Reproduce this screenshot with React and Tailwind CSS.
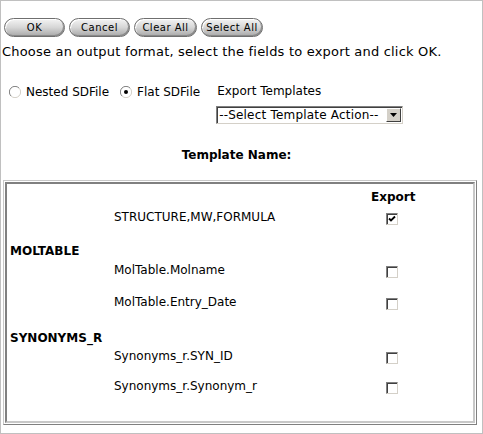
import { useState } from 'react';

const font = { fontFamily: '"DejaVu Sans", Verdana, sans-serif' };

const PillButton = ({ label, width }) => (
  <button
    className={`h-[19px] rounded-full border border-[#6f6f6f] bg-gradient-to-b from-[#f4f4f4] via-[#d6d6d6] to-[#a9a9a9] text-[10px] leading-none text-black shadow-[inset_-1px_-1px_0_#8a8a8a,inset_1px_1px_0_#ffffff] tracking-[0.5px] ${width}`}
  >
    {label}
  </button>
);

const Radio = ({ checked, onClick }) => (
  <svg width="12" height="12" viewBox="0 0 12 12" onClick={onClick} className="shrink-0 cursor-pointer">
    <circle cx="6" cy="6" r="5.5" fill="#ffffff" />
    <path d="M10 2 A5.5 5.5 0 0 0 2 10" fill="none" stroke="#808080" strokeWidth="1" />
    <path d="M2 10 A5.5 5.5 0 0 0 10 2" fill="none" stroke="#d4d0c8" strokeWidth="1" />
    {checked && <circle cx="6" cy="6" r="2" fill="#000000" />}
  </svg>
);

const Checkbox = ({ checked, onClick }) => (
  <span
    onClick={onClick}
    className="flex h-[12px] w-[12px] cursor-pointer items-center justify-center border border-t-[#808080] border-l-[#808080] border-b-[#d4d0c8] border-r-[#d4d0c8] bg-white shadow-[inset_1px_1px_0_#404040]"
  >
    {checked && (
      <svg width="8" height="8" viewBox="0 0 8 8">
        <path d="M1 3.5 L3 5.5 L7 1.5" fill="none" stroke="#000" strokeWidth="1.8" />
      </svg>
    )}
  </span>
);

const Item = ({ label, checked, onToggle, h }) => (
  <div className={`flex items-center ${h}`}>
    <span className="ml-[107px] w-[272px]">{label}</span>
    <span className="mt-[3px]">
      <Checkbox checked={checked} onClick={onToggle} />
    </span>
  </div>
);

export default function App() {
  const [format, setFormat] = useState('flat');
  const [fields, setFields] = useState({
    structure: true,
    molname: false,
    entry: false,
    synid: false,
    synonym: false,
  });
  const toggle = (k) => setFields({ ...fields, [k]: !fields[k] });

  return (
    <div style={font} className="h-[434px] w-[483px] border border-[#c0c0c0] bg-white text-[12px] text-black">
      {/* buttons */}
      <div className="ml-[3px] mt-[17px] flex gap-[4px]">
        <PillButton label="OK" width="w-[61px]" />
        <PillButton label="Cancel" width="w-[61px]" />
        <PillButton label="Clear All" width="w-[63px]" />
        <PillButton label="Select All" width="w-[62px]" />
      </div>
      <div className="ml-[1px] mt-[6px] text-[13px] leading-[17px] tracking-[0.2px]">
        Choose an output format, select the fields to export and click OK.
      </div>

      {/* format + templates */}
      <div className="mt-[23px] flex">
        <div className="ml-[8px] flex h-[17px] items-center">
          <Radio checked={format === 'nested'} onClick={() => setFormat('nested')} />
          <span className="ml-[5px]">Nested SDFile</span>
          <span className="ml-[11px]">
            <Radio checked={format === 'flat'} onClick={() => setFormat('flat')} />
          </span>
          <span className="ml-[5px]">Flat SDFile</span>
        </div>
        <div className="ml-[16px] flex flex-col">
          <span className="ml-[1px] leading-[17px]">Export Templates</span>
          <div className="mt-[6px] flex h-[18px] w-[187px] items-center border border-t-[#808080] border-l-[#808080] border-b-[#d4d0c8] border-r-[#d4d0c8] bg-white shadow-[inset_1px_1px_0_#404040]">
            <span className="ml-[2px] flex-1 whitespace-nowrap text-[12px] leading-[14px] tracking-[0.2px]">--Select Template Action--</span>
            <span className="mr-[1px] flex h-[14px] w-[15px] shrink-0 items-center justify-center border border-t-white border-l-white border-b-[#404040] border-r-[#404040] bg-[#d4d0c8]">
              <svg width="7" height="4" viewBox="0 0 7 4">
                <path d="M0 0 H7 L3.5 4 Z" fill="#000" />
              </svg>
            </span>
          </div>
        </div>
      </div>

      <div className="mt-[23px] pr-[10px] text-center font-bold leading-[16px]">Template Name:</div>

      {/* fields table */}
      <div className="ml-[2px] mt-[17px] w-[474px] border border-t-[#c8c8c8] border-l-[#c8c8c8] border-b-[#808080] border-r-[#808080] p-[1px]">
        <div className="h-[241px] border-2 border-t-[#808080] border-l-[#808080] border-b-[#c8c8c8] border-r-[#c8c8c8] pt-[4px]">
          <div className="flex h-[18px] items-center">
            <span className="ml-[364px] font-bold">Export</span>
          </div>
          <Item label="STRUCTURE,MW,FORMULA" checked={fields.structure} onToggle={() => toggle('structure')} h="h-[22px]" />
          <div className="mt-[14px] flex h-[18px] items-center font-bold">
            <span className="ml-[3px]">MOLTABLE</span>
          </div>
          <Item label="MolTable.Molname" checked={fields.molname} onToggle={() => toggle('molname')} h="h-[20px]" />
          <div className="mt-[12px]">
            <Item label="MolTable.Entry_Date" checked={fields.entry} onToggle={() => toggle('entry')} h="h-[20px]" />
          </div>
          <div className="mt-[17px] flex h-[18px] items-center font-bold">
            <span className="ml-[3px]">SYNONYMS_R</span>
          </div>
          <Item label="Synonyms_r.SYN_ID" checked={fields.synid} onToggle={() => toggle('synid')} h="h-[18px]" />
          <div className="mt-[12px]">
            <Item label="Synonyms_r.Synonym_r" checked={fields.synonym} onToggle={() => toggle('synonym')} h="h-[18px]" />
          </div>
        </div>
      </div>
    </div>
  );
}
